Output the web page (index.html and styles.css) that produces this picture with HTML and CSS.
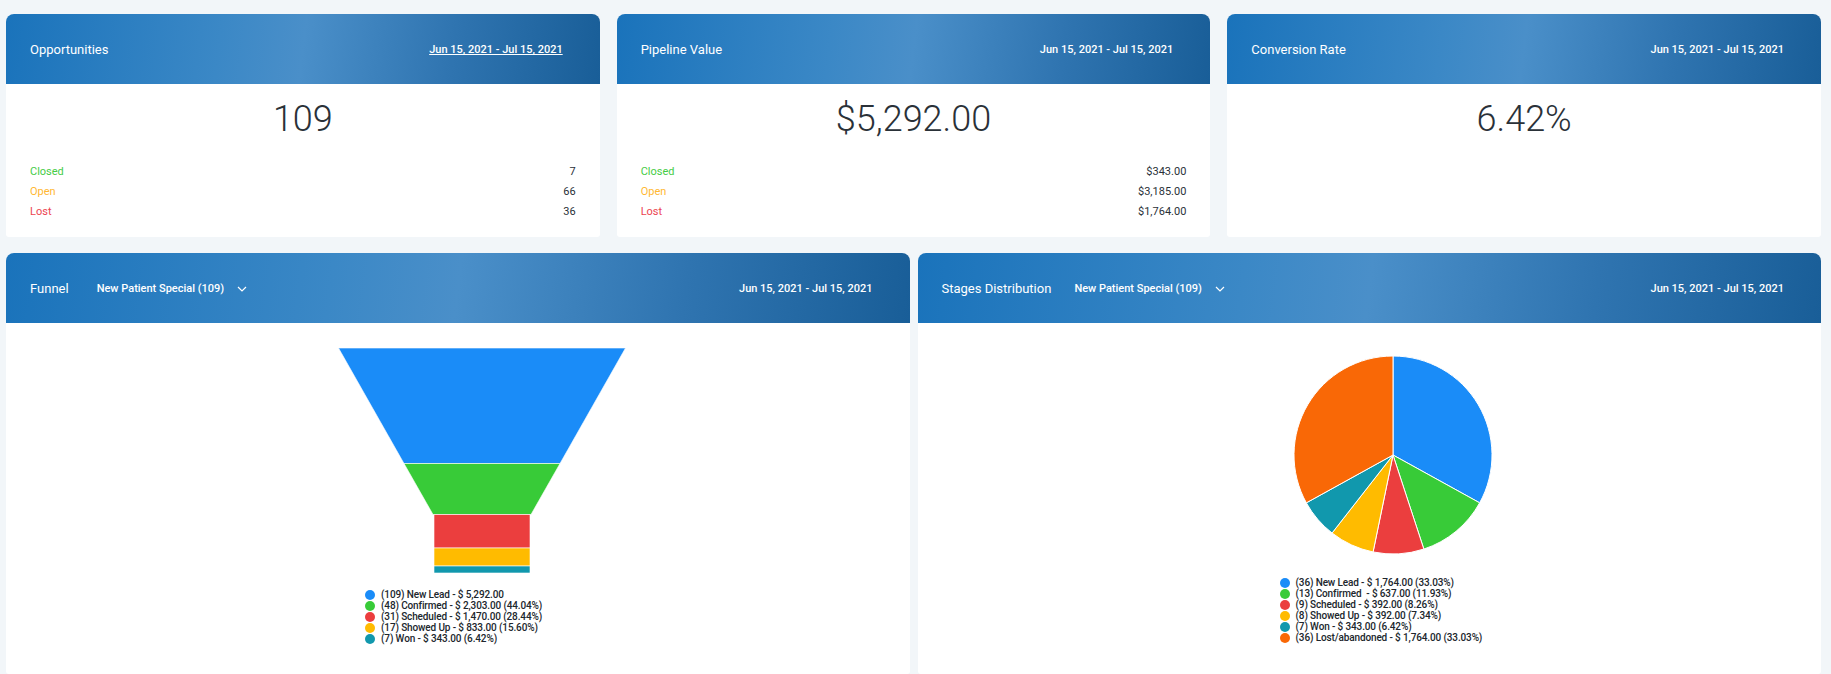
FILE: index.html
```html
<!DOCTYPE html>
<html>
    <head>
        <meta charset="utf-8">
        <title>Opportunities</title>
        <link rel="stylesheet" href="styles.css">
    </head>
    <body>
        <div class="row row-stats">
            <div class="card">
                <div class="card-head">
                    <span class="title">Opportunities</span>
                    <a class="dates dates-link">Jun 15, 2021 - Jul 15, 2021</a>
                </div>
                <div class="stat">
                    <div class="big">109</div>
                    <div class="line"><span class="closed">Closed</span><span>7</span></div>
                    <div class="line"><span class="open">Open</span><span>66</span></div>
                    <div class="line"><span class="lost">Lost</span><span>36</span></div>
                </div>
            </div>
            <div class="card">
                <div class="card-head">
                    <span class="title">Pipeline Value</span>
                    <span class="dates">Jun 15, 2021 - Jul 15, 2021</span>
                </div>
                <div class="stat">
                    <div class="big">$5,292.00</div>
                    <div class="line"><span class="closed">Closed</span><span>$343.00</span></div>
                    <div class="line"><span class="open">Open</span><span>$3,185.00</span></div>
                    <div class="line"><span class="lost">Lost</span><span>$1,764.00</span></div>
                </div>
            </div>
            <div class="card">
                <div class="card-head">
                    <span class="title">Conversion Rate</span>
                    <span class="dates">Jun 15, 2021 - Jul 15, 2021</span>
                </div>
                <div class="stat">
                    <div class="big">6.42%</div>
                </div>
            </div>
        </div>

        <div class="row row-charts">
            <div class="card">
                <div class="card-head">
                    <span class="title title-funnel">Funnel</span>
                    <span class="picker">New Patient Special (109)
                        <svg class="chevron" viewBox="0 0 10 6"><path d="M1 1l4 4 4-4"/></svg>
                    </span>
                    <span class="dates">Jun 15, 2021 - Jul 15, 2021</span>
                </div>
                <div class="chart chart-funnel">
                    <svg class="funnel" viewBox="0 0 300 240">
                        <polygon fill="#1a8cf8" points="6.5,8 293.5,8 228,123.5 72,123.5"/>
                        <polygon fill="#38cb38" points="72,123.5 228,123.5 199,174.5 101,174.5"/>
                        <polygon fill="#eb3e3e" points="102,174.5 198,174.5 198,208 102,208"/>
                        <polygon fill="#ffbb00" points="102,208 198,208 198,226 102,226"/>
                        <polygon fill="#1198ad" points="102,226 198,226 198,233 102,233"/>
                    </svg>
                    <ul class="legend">
                        <li><i class="dot blue"></i>(109) New Lead - $ 5,292.00</li>
                        <li><i class="dot green"></i>(48) Confirmed - $ 2,303.00 (44.04%)</li>
                        <li><i class="dot red"></i>(31) Scheduled - $ 1,470.00 (28.44%)</li>
                        <li><i class="dot yellow"></i>(17) Showed Up - $ 833.00 (15.60%)</li>
                        <li><i class="dot teal"></i>(7) Won - $ 343.00 (6.42%)</li>
                    </ul>
                </div>
            </div>
            <div class="card">
                <div class="card-head">
                    <span class="title">Stages Distribution</span>
                    <span class="picker">New Patient Special (109)
                        <svg class="chevron" viewBox="0 0 10 6"><path d="M1 1l4 4 4-4"/></svg>
                    </span>
                    <span class="dates">Jun 15, 2021 - Jul 15, 2021</span>
                </div>
                <div class="chart chart-pie">
                    <svg class="pie" viewBox="0 0 200 200">
                        <path fill="#1a8cf8" d="M100 100L100 1A99 99 0 0 1 186.67 147.85Z"/>
                        <path fill="#38cb38" d="M100 100L186.67 147.85A99 99 0 0 1 130.84 194.07Z"/>
                        <path fill="#eb3e3e" d="M100 100L130.84 194.07A99 99 0 0 1 80.09 196.98Z"/>
                        <path fill="#ffbb00" d="M100 100L80.09 196.98A99 99 0 0 1 39.05 178.01Z"/>
                        <path fill="#1198ad" d="M100 100L39.05 178.01A99 99 0 0 1 13.33 147.85Z"/>
                        <path fill="#f96806" d="M100 100L13.33 147.85A99 99 0 0 1 100 1Z"/>
                    </svg>
                    <ul class="legend">
                        <li><i class="dot blue"></i>(36) New Lead - $ 1,764.00 (33.03%)</li>
                        <li><i class="dot green"></i>(13) Confirmed  - $ 637.00 (11.93%)</li>
                        <li><i class="dot red"></i>(9) Scheduled - $ 392.00 (8.26%)</li>
                        <li><i class="dot yellow"></i>(8) Showed Up - $ 392.00 (7.34%)</li>
                        <li><i class="dot teal"></i>(7) Won - $ 343.00 (6.42%)</li>
                        <li><i class="dot orange"></i>(36) Lost/abandoned - $ 1,764.00 (33.03%)</li>
                    </ul>
                </div>
            </div>
        </div>
    </body>
</html>
```

FILE: styles.css
```css
html, body {
  height: 100%;
}

body {
  background: #f2f6f9;
  color: #2a3138;
  display: flex;
  flex-direction: column;
  font: 400 11px/1.2 Roboto, sans-serif;
  margin: 0;
  overflow: hidden;
  padding: 14px 10px 0 6px;
  box-sizing: border-box;
}

.row {
  display: grid;
}

.row-stats {
  flex: none;
  gap: 17px;
  grid-template-columns: repeat(3, 1fr);
  height: 223px;
}

.row-charts {
  flex: 1;
  gap: 8px;
  grid-template-columns: repeat(2, 1fr);
  margin-top: 16px;
}

.card {
  background: #fff;
  border-radius: 8px 8px 3px 3px;
  overflow: hidden;
}

.card-head {
  align-items: center;
  background: linear-gradient(97deg, #1a73bb 0%, #3b88c6 36%, #4a8fc9 50%, #2f74b0 75%, #195e98 100%);
  color: #fff;
  display: flex;
  height: 70px;
  padding: 2px 37px 0 24px;
  box-sizing: border-box;
}

.title {
  font-size: 13px;
}

.title-funnel {
  margin-right: 5px;
}

.picker {
  align-items: center;
  display: flex;
  font-weight: 500;
  margin-left: 23px;
}

.chevron {
  fill: none;
  height: 6px;
  margin-left: 13px;
  stroke: #fff;
  stroke-width: 1.2;
  width: 10px;
}

.dates {
  font-weight: 500;
  margin-left: auto;
}

.dates-link {
  text-decoration: underline;
}

.stat {
  padding: 0 24px;
}

.big {
  font-size: 36px;
  font-weight: 300;
  line-height: 46px;
  margin: 12px 0 20px;
  text-align: center;
}

.line {
  display: flex;
  justify-content: space-between;
  line-height: 20px;
}

.closed { color: #45cc45; }
.open { color: #ffb832; }
.lost { color: #ec4450; }

.chart svg {
  display: block;
}

.chart-funnel {
  padding: 17px 0 0 326px;
}

.funnel {
  height: 240px;
  width: 300px;
}

.chart-funnel .legend {
  margin: 9px 0 0 33px;
}

.chart-pie {
  padding: 32px 0 0 375px;
}

.pie {
  height: 200px;
  width: 200px;
}

.chart-pie .legend {
  margin: 22px 0 0 -13px;
}

.funnel polygon,
.pie path {
  stroke: #fff;
  stroke-opacity: 0.6;
}

.pie path {
  stroke-opacity: 1;
}

.legend {
  color: #20262c;
  font-size: 10px;
  font-weight: 500;
  letter-spacing: -0.13px;
  line-height: 11px;
  list-style: none;
  padding: 0;
}

.legend li {
  align-items: center;
  display: flex;
  white-space: pre;
}

.dot {
  border-radius: 50%;
  flex: none;
  height: 10px;
  margin-right: 6px;
  width: 10px;
}

.blue { background: #1a8cf8; }
.green { background: #38cb38; }
.red { background: #eb3e3e; }
.yellow { background: #ffbb00; }
.teal { background: #1198ad; }
.orange { background: #f96806; }
```
